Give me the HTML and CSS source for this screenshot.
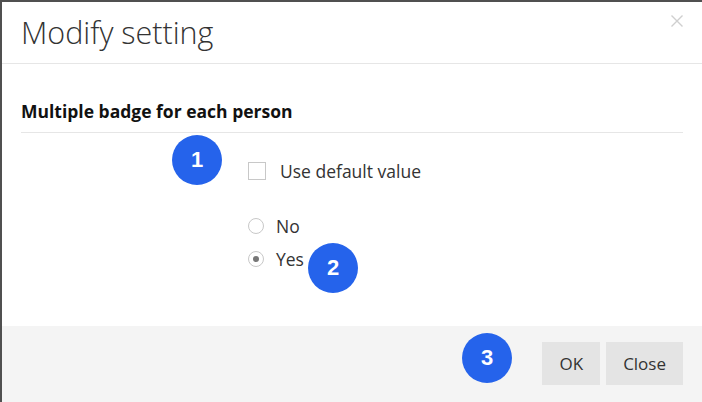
FILE: index.html
```html
<!DOCTYPE html>
<html>
<head>
<meta charset="utf-8">
<link rel="stylesheet" href="styles.css">
</head>
<body>
<div class="dialog">
  <div class="header">
    <h1 class="title">Modify setting</h1>
    <span class="close-x">
      <svg width="12" height="12" viewBox="0 0 12 12"><path d="M0.5 0.5 L11.5 11.5 M11.5 0.5 L0.5 11.5" stroke="#cfcfcf" stroke-width="1.4" fill="none"/></svg>
    </span>
  </div>
  <div class="body">
    <h2 class="section">Multiple badge for each person</h2>
    <div class="form">
      <label class="check-row"><span class="checkbox"></span><span>Use default value</span></label>
      <div class="radios">
        <label class="radio-row"><span class="radio"></span><span>No</span></label>
        <label class="radio-row"><span class="radio checked"></span><span>Yes</span></label>
      </div>
    </div>
  </div>
  <div class="footer">
    <button class="btn">OK</button>
    <button class="btn">Close</button>
  </div>
  <span class="badge b1">1</span>
  <span class="badge b2">2</span>
  <span class="badge b3">3</span>
</div>
</body>
</html>
```
FILE: styles.css
```css
html, body {
  margin: 0;
  padding: 0;
  background: #6b5a3a;
}
body {
  font-family: "Open Sans", "Segoe UI", sans-serif;
  color: #222;
}
.dialog {
  position: relative;
  width: 702px;
  height: 402px;
  box-sizing: border-box;
  background: #fff;
  border-top: 2px solid #505050;
  border-left: 2px solid #505050;
  display: flex;
  flex-direction: column;
  overflow: hidden;
}
.header {
  height: 61px;
  border-bottom: 1px solid #e6e6e6;
  display: flex;
  align-items: flex-start;
  justify-content: space-between;
  padding: 0 19px 0 19px;
}
.title {
  margin: 0;
  padding-top: 10px;
  font-weight: 300;
  font-size: 30.5px;
  line-height: 40px;
  color: #333;
}
.close-x {
  margin-top: 13px;
  display: flex;
}
.body {
  flex: 1;
  padding: 0 19px 0 19px;
  display: flex;
  flex-direction: column;
}
.section {
  margin: 35px 0 0 0;
  font-size: 17.5px;
  font-weight: 700;
  line-height: 24px;
  padding-bottom: 9px;
  border-bottom: 1px solid #e6e6e6;
  color: #111;
}
.form {
  padding-left: 227px;
  padding-top: 28px;
  font-size: 17.5px;
  color: #333;
}
.check-row {
  display: flex;
  align-items: center;
  gap: 14px;
  height: 20px;
}
.checkbox {
  width: 16px;
  height: 16px;
  border: 1px solid #c8c8c8;
  background: #fff;
  display: inline-block;
}
.radios {
  margin-top: 35px;
  display: flex;
  flex-direction: column;
  gap: 13px;
}
.radio-row {
  display: flex;
  align-items: center;
  gap: 12px;
  height: 20px;
}
.radio {
  width: 14px;
  height: 14px;
  border: 1px solid #c8c8c8;
  border-radius: 50%;
  background: #fff;
  display: inline-flex;
  align-items: center;
  justify-content: center;
}
.radio.checked::after {
  content: "";
  width: 6px;
  height: 6px;
  border-radius: 50%;
  background: #777;
}
.footer {
  height: 76px;
  background: #f4f4f4;
  display: flex;
  justify-content: flex-end;
  align-items: flex-start;
  gap: 6px;
  padding: 16px 19px 0 0;
  box-sizing: border-box;
}
.btn {
  height: 43px;
  border: none;
  background: #e4e4e4;
  font-family: "Open Sans", "Segoe UI", sans-serif;
  font-size: 17px;
  color: #333;
  padding: 0 17px;
}
.badge {
  position: absolute;
  width: 50px;
  height: 50px;
  border-radius: 50%;
  background: #2563eb;
  color: #fff;
  font-family: "Liberation Sans", Arial, sans-serif;
  font-weight: 700;
  font-size: 22px;
  display: flex;
  align-items: center;
  justify-content: center;
}
.b1 { left: 170px; top: 133px; }
.b2 { left: 306px; top: 241px; }
.b3 { left: 460px; top: 331px; }
```
